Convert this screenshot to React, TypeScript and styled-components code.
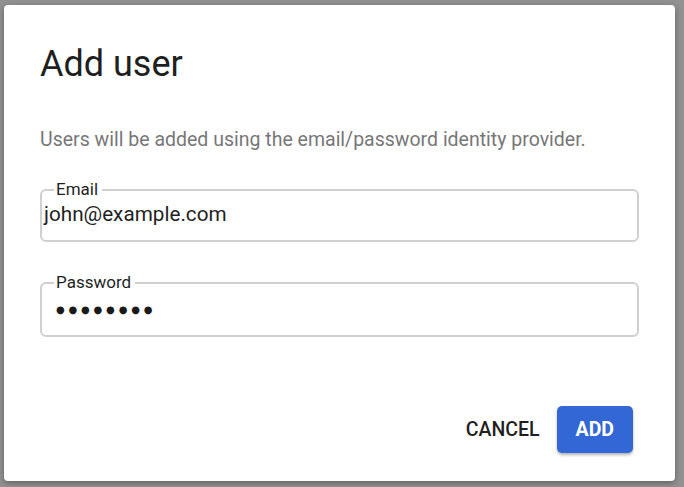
import React from "react";
import styled, { createGlobalStyle } from "styled-components";

const Global = createGlobalStyle`
  html, body { margin: 0; padding: 0; }
  body {
    background: #929292;
    font-family: Roboto, "Noto Sans", Arial, sans-serif;
    width: 684px;
    height: 487px;
    overflow: hidden;
  }
  #root { padding: 5px 0 0 4px; }
`;

const Dialog = styled.div`
  box-sizing: border-box;
  width: 671px;
  height: 476px;
  background: #ffffff;
  border-radius: 4px;
  box-shadow: 0 2px 6px rgba(0, 0, 0, 0.35);
  padding: 41px 36px 28px 36px;
  display: flex;
  flex-direction: column;
`;

const Title = styled.h2`
  margin: 0;
  font-size: 36px;
  line-height: 36px;
  font-weight: 400;
  color: #1f1f1f;
`;

const Description = styled.p`
  margin: 48px 0 0 0;
  font-size: 19.5px;
  line-height: 20px;
  color: #777777;
`;

const Field = styled.fieldset<{ $gap: number }>`
  margin: ${(p) => p.$gap}px 0 0 0;
  padding: 6px 3px 15px 2px;
  border: 2px solid #d0d0d0;
  border-radius: 6px;
  min-width: 0;
`;

const Legend = styled.legend`
  margin-left: 10px;
  padding: 0 4px 0 2px;
  font-size: 17px;
  line-height: 17px;
  color: #1f1f1f;
`;

const Value = styled.div`
  font-size: 20.7px;
  line-height: 21px;
  color: #1f1f1f;
`;

const Dots = styled.div`
  font-size: 10px;
  line-height: 21px;
  height: 21px;
  padding: 2px 0 0 12px;
  letter-spacing: 3.8px;
  color: #1a1a1a;
  font-family: "DejaVu Sans", sans-serif;
`;

const Footer = styled.div`
  margin-top: auto;
  display: flex;
  justify-content: flex-end;
  align-items: center;
  gap: 9px;
  padding-right: 6px;
`;

const Button = styled.button<{ $primary?: boolean }>`
  font-family: Roboto, Arial, sans-serif;
  font-size: 19.5px;
  height: 47px;
  border: none;
  border-radius: 5px;
  cursor: pointer;
  padding: 0 ${(p) => (p.$primary ? 19 : 8)}px;
  background: ${(p) => (p.$primary ? "#3367d6" : "transparent")};
  color: ${(p) => (p.$primary ? "#ffffff" : "#1f1f1f")};
  box-shadow: ${(p) => (p.$primary ? "0 2px 3px rgba(0,0,0,0.3)" : "none")};
  font-weight: ${(p) => (p.$primary ? 700 : 500)};
`;

export default function App() {
  return (
    <>
      <Global />
      <Dialog>
        <Title>Add user</Title>
        <Description>
          Users will be added using the email/password identity provider.
        </Description>
        <Field $gap={31}>
          <Legend>Email</Legend>
          <Value>john@example.com</Value>
        </Field>
        <Field $gap={32}>
          <Legend>Password</Legend>
          <Dots>●●●●●●●●</Dots>
        </Field>
        <Footer>
          <Button>CANCEL</Button>
          <Button $primary>ADD</Button>
        </Footer>
      </Dialog>
    </>
  );
}
